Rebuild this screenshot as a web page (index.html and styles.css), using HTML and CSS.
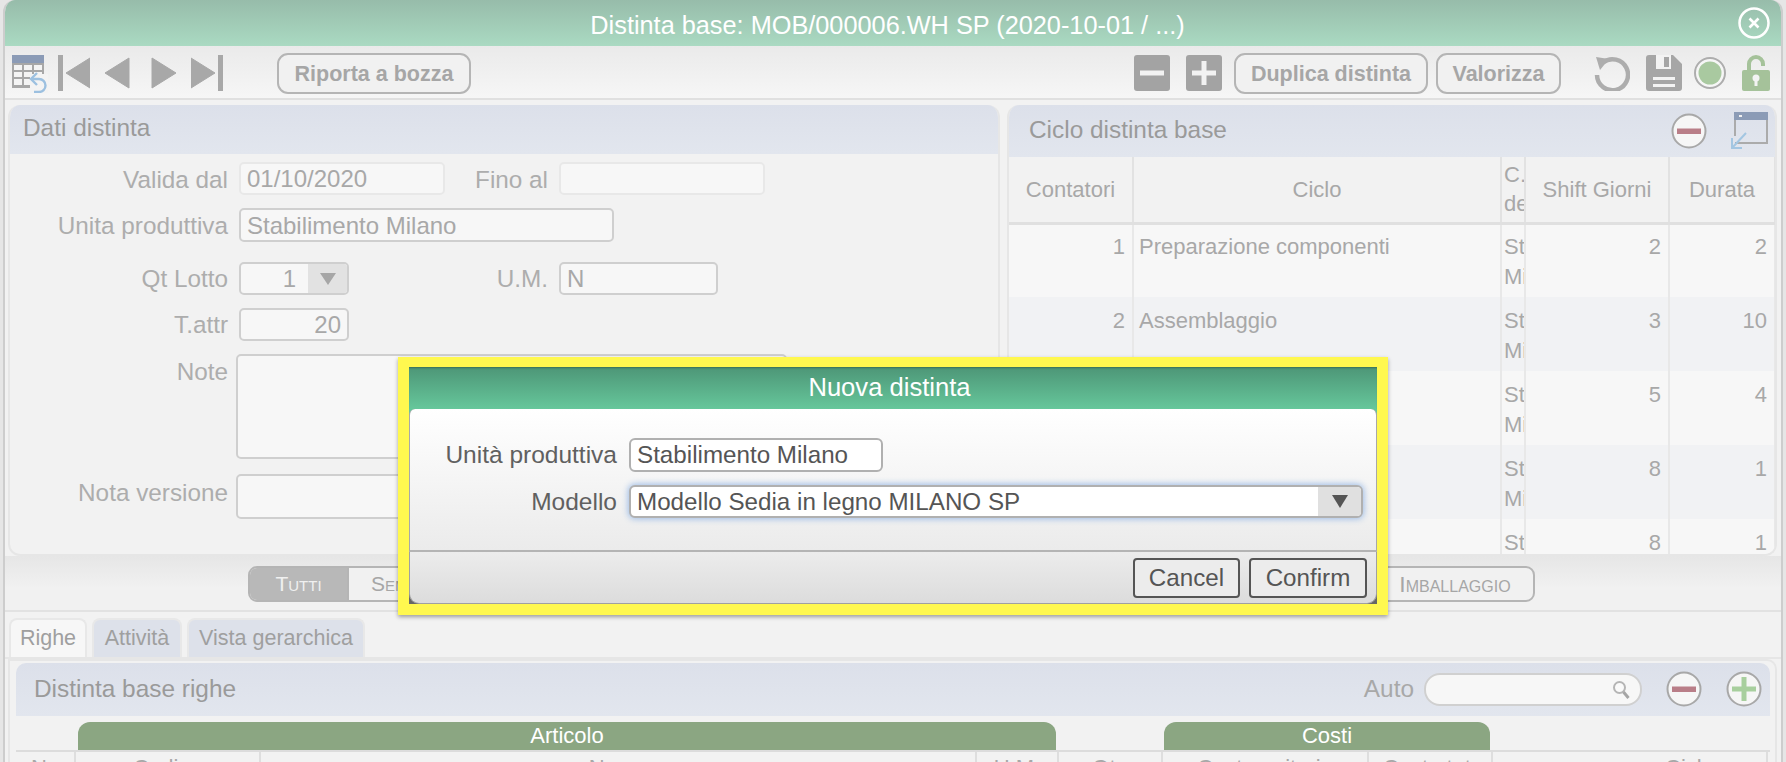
FILE: index.html
```html
<!DOCTYPE html>
<html lang="it">
<head>
<meta charset="utf-8">
<title>Distinta base</title>
<link rel="stylesheet" href="styles.css">
</head>
<body>
<div class="page">
  <div class="window">
    <header class="titlebar">
      <span></span>
      <span class="title-text">Distinta base: MOB/000006.WH SP (2020-10-01 / ...)</span>
      <svg class="close" width="32" height="32" viewBox="0 0 32 32"><circle cx="16" cy="16" r="14.5" fill="none" stroke="#fff" stroke-width="2.5"/><path d="M11.5 11.5l9 9M20.5 11.5l-9 9" stroke="#fff" stroke-width="2.6" fill="none"/></svg>
    </header>

    <div class="toolbar">
      <svg class="ic-table" width="36" height="38" viewBox="0 0 36 38"><rect x="0" y="0" width="32" height="33" fill="#a7a7a7"/><rect x="0" y="0" width="32" height="8" fill="#8b9bb6"/><g fill="#f4f4f4"><rect x="2" y="10" width="8" height="5"/><rect x="12" y="10" width="8" height="5"/><rect x="22" y="10" width="8" height="5"/><rect x="2" y="17" width="8" height="5"/><rect x="12" y="17" width="8" height="5"/><rect x="22" y="17" width="8" height="5"/><rect x="2" y="24" width="8" height="6"/><rect x="12" y="24" width="8" height="6"/></g><rect x="18" y="19" width="18" height="19" fill="#f3f3f3"/><path d="M19 24h8a6.500 6.500 0 0 1 0 13h-5" fill="none" stroke="#9cc0e0" stroke-width="2.400"/><path d="M25 18l-6 6 6 6" fill="none" stroke="#9cc0e0" stroke-width="2.400"/></svg>
      <svg class="ic-first" width="32" height="36" viewBox="0 0 32 36"><rect width="5" height="36" fill="#a8a8a8"/><path d="M32 3v30l-24-15z" fill="#a8a8a8" stroke="#a8a8a8" stroke-linejoin="round"/></svg>
      <svg class="ic-prev" width="26" height="36" viewBox="0 0 26 36"><path d="M25 3v30L1 18z" fill="#a8a8a8" stroke="#a8a8a8" stroke-linejoin="round"/></svg>
      <svg class="ic-next" width="26" height="36" viewBox="0 0 26 36"><path d="M1 3v30l24-15z" fill="#a8a8a8" stroke="#a8a8a8" stroke-linejoin="round"/></svg>
      <svg class="ic-last" width="32" height="36" viewBox="0 0 32 36"><path d="M0 3v30l24-15z" fill="#a8a8a8" stroke="#a8a8a8" stroke-linejoin="round"/><rect x="27" width="5" height="36" fill="#a8a8a8"/></svg>
      <div class="tbtn btn-back">Riporta a bozza</div>
      <div class="grow"></div>
      <svg class="ic-box" width="36" height="36" viewBox="0 0 36 36"><rect width="36" height="36" rx="3" fill="#a3a3a3"/><rect x="6" y="15.500" width="24" height="5" fill="#f2f2f2"/></svg>
      <svg class="ic-box2" width="36" height="36" viewBox="0 0 36 36"><rect width="36" height="36" rx="3" fill="#a3a3a3"/><path d="M6 18h24M18 6v24" stroke="#f2f2f2" stroke-width="5"/></svg>
      <div class="tbtn btn-dup">Duplica distinta</div>
      <div class="tbtn btn-val">Valorizza</div>
      <svg class="ic-refresh" width="36" height="36" viewBox="0 0 36 36"><path d="M9 7.500A15.500 15.500 0 1 1 3 20" fill="none" stroke="#adadad" stroke-width="4.500"/><path d="M2 2l13 2-9 11z" fill="#adadad"/></svg>
      <svg class="ic-save" width="36" height="36" viewBox="0 0 36 36"><path d="M3 0h24l9 9v24a3 3 0 0 1-3 3H3a3 3 0 0 1-3-3V3a3 3 0 0 1 3-3z" fill="#a6a6a6"/><rect x="10" y="0" width="15" height="14" fill="#f3f3f3"/><rect x="18" y="2" width="5" height="10" fill="#a6a6a6"/><rect x="7" y="22" width="22" height="3" fill="#f3f3f3"/><rect x="7" y="29" width="22" height="3" fill="#f3f3f3"/></svg>
      <svg class="ic-status" width="32" height="34" viewBox="0 0 32 34"><circle cx="16" cy="17" r="15" fill="#f6f6f6" stroke="#adadad" stroke-width="2"/><circle cx="16" cy="17" r="11.500" fill="#a9c9a0"/></svg>
      <svg class="ic-lock" width="28" height="36" viewBox="0 0 28 36"><path d="M7 16V9a7 7 0 0 1 14 0v2" fill="none" stroke="#a5c29a" stroke-width="4"/><rect y="15" width="28" height="21" rx="2" fill="#a5c29a"/><circle cx="14" cy="23" r="3.500" fill="#f3f3f3"/><rect x="12.500" y="24" width="3" height="7" fill="#f3f3f3"/></svg>
    </div>

    <div class="panels">
      <section class="panel panel-left">
        <div class="panel-head head-left">Dati distinta</div>
        <div class="form">
          <div class="row row-a">
            <div class="label">Valida dal</div>
            <div class="field faint w-date">01/10/2020</div>
            <div class="label label-2">Fino al</div>
            <div class="field faint w-date"></div>
          </div>
          <div class="row row-b">
            <div class="label">Unita produttiva</div>
            <div class="field w-unit">Stabilimento Milano</div>
          </div>
          <div class="row row-c">
            <div class="label">Qt Lotto</div>
            <div class="field w-num has-arrow"><span class="num-val">1</span><span class="arrow-box box-small"><i class="tri tri-light"></i></span></div>
            <div class="label label-um">U.M.</div>
            <div class="field w-um">N</div>
          </div>
          <div class="row row-d">
            <div class="label">T.attr</div>
            <div class="field w-num right">20</div>
          </div>
          <div class="row row-e">
            <div class="label label-top">Note</div>
            <div class="field area w-area"></div>
          </div>
          <div class="row row-f">
            <div class="label label-top2">Nota versione</div>
            <div class="field area w-area h-nota"></div>
          </div>
        </div>
      </section>

      <section class="panel panel-right">
        <div class="panel-head head-right">
          <span>Ciclo distinta base</span>
          <div class="grow"></div>
          <svg class="ic-remove" width="36" height="36" viewBox="0 0 36 36"><circle cx="18" cy="18" r="16.500" fill="#f6f6f6" stroke="#a8a8a8" stroke-width="2"/><rect x="6" y="15.500" width="24" height="5.500" fill="#b97e88"/></svg>
          <svg class="ic-expand" width="38" height="38" viewBox="0 0 38 38"><path d="M5 2v22M5 31h32V2" fill="none" stroke="#ababab" stroke-width="2"/><rect x="4" y="0" width="34" height="8" fill="#8b9bb6"/><rect x="9" y="3" width="3" height="2" fill="#f0f0f0"/><path d="M16 21L2 36M2 26v10h10" fill="none" stroke="#a3c6e2" stroke-width="2"/></svg>
        </div>
        <table class="grid">
          <colgroup><col class="c1"><col class="c2"><col class="c3"><col class="c4"><col class="c5"></colgroup>
          <thead>
            <tr><th>Contatori</th><th>Ciclo</th><th class="narrow">C. de</th><th>Shift Giorni</th><th>Durata</th></tr>
          </thead>
          <tbody>
            <tr><td class="n">1</td><td>Preparazione componenti</td><td class="narrow">Stabilimento Milano</td><td class="n">2</td><td class="n">2</td></tr>
            <tr><td class="n">2</td><td>Assemblaggio</td><td class="narrow">Stabilimento Milano</td><td class="n">3</td><td class="n">10</td></tr>
            <tr><td class="n">3</td><td>Verniciatura</td><td class="narrow">Stabilimento Milano</td><td class="n">5</td><td class="n">4</td></tr>
            <tr><td class="n">4</td><td>Controllo</td><td class="narrow">Stabilimento Milano</td><td class="n">8</td><td class="n">1</td></tr>
            <tr><td class="n">5</td><td>Imballaggio</td><td class="narrow">Stabilimento Milano</td><td class="n">8</td><td class="n">1</td></tr>
          </tbody>
        </table>
      </section>
    </div>

    <div class="segbar">
      <div class="seg">
        <div class="seg-item seg-on">Tutti</div>
        <div class="seg-item seg-mid">Semilavorati</div>
        <div class="seg-item seg-end">Imballaggio</div>
      </div>
    </div>

    <div class="tabs">
      <div class="tab tab-on">Righe</div>
      <div class="tab tab-2">Attività</div>
      <div class="tab tab-3">Vista gerarchica</div>
    </div>

    <div class="tabpanel">
      <div class="lines">
        <div class="panel-head head-lines">
          <span>Distinta base righe</span>
          <div class="grow"></div>
          <span class="auto">Auto</span>
          <div class="search">
            <svg width="18" height="20" viewBox="0 0 18 20"><circle cx="7.500" cy="7.500" r="5.500" fill="#fafafa" stroke="#b5b5b5" stroke-width="2"/><path d="M11.500 12l5 6" stroke="#a5a5a5" stroke-width="3"/></svg>
          </div>
          <svg class="ic-rm2" width="36" height="36" viewBox="0 0 36 36"><circle cx="18" cy="18" r="16.500" fill="#f6f6f6" stroke="#a8a8a8" stroke-width="2"/><rect x="6" y="15.500" width="24" height="5.500" fill="#b97e88"/></svg>
          <svg class="ic-add" width="36" height="36" viewBox="0 0 36 36"><circle cx="18" cy="18" r="16.500" fill="#f6f6f6" stroke="#a8a8a8" stroke-width="2"/><path d="M6 18h24M18 6v24" stroke="#a8cf9e" stroke-width="5"/></svg>
        </div>
        <div class="groups">
          <div class="group g-art">Articolo</div>
          <div class="group g-cost">Costi</div>
        </div>
        <div class="cols">
          <div class="col k1">Nr.</div>
          <div class="col k2">Codice</div>
          <div class="col k3">Nome</div>
          <div class="col k4">U.M.</div>
          <div class="col k5">Qta</div>
          <div class="col k6">Costo unitario</div>
          <div class="col k7">Costo tot.</div>
          <div class="col k8">Ciclo</div>
        </div>
      </div>
    </div>
  </div>

  <div class="dialog">
    <div class="dlg-title">Nuova distinta</div>
    <div class="dlg-body">
      <div class="dlg-row">
        <div class="dlg-label">Unità produttiva</div>
        <div class="dlg-field dlg-unit">Stabilimento Milano</div>
      </div>
      <div class="dlg-row dlg-row-2">
        <div class="dlg-label">Modello</div>
        <div class="dlg-field dlg-select"><span class="dlg-sel-text">Modello Sedia in legno MILANO SP</span><span class="arrow-box box-dlg"><i class="tri tri-dark"></i></span></div>
      </div>
    </div>
    <div class="dlg-foot">
      <div class="dlg-btn btn-cancel">Cancel</div>
      <div class="dlg-btn btn-confirm">Confirm</div>
    </div>
  </div>
</div>
</body>
</html>
```

FILE: styles.css
```css
* { box-sizing: border-box; }
html, body { margin: 0; padding: 0; }
body { font-family: "Liberation Sans", Arial, sans-serif; background: #e6e6e6; }
svg { display: block; flex: none; }
.page { position: relative; width: 1786px; height: 762px; overflow: hidden; background: #e6e6e6; }
.grow { flex: 1; }

.window { margin-left: 3px; width: 1780px; height: 762px; background: #f2f2f2; border-left: 2px solid #cdcdcd; border-right: 2px solid #cdcdcd; border-radius: 12px 12px 0 0; overflow: hidden; }

.titlebar { height: 46px; display: grid; grid-template-columns: 1fr auto 1fr; align-items: center; padding-right: 11px; background: linear-gradient(#97bcaa, #aadac2); color: #fff; font-size: 25.300px; }
.title-text { padding-top: 4px; }
.close { justify-self: end; }

.toolbar { height: 54px; display: flex; align-items: center; padding: 2px 11px 0 7px; background: linear-gradient(#eaeaea, #f6f6f6); border-bottom: 2px solid #e0e0e0; }
.ic-table { margin-right: 10px; margin-top: 2px; }
.ic-prev { margin-left: 14px; }
.ic-next { margin-left: 21px; }
.ic-last { margin-left: 14px; }
.tbtn { height: 41px; padding-top: 3px; border: 2px solid #b5b5b5; border-radius: 11px; background: #f1f1f1; color: #a6a6a6; font-weight: bold; font-size: 21.500px; display: flex; align-items: center; justify-content: center; }
.btn-back { width: 194px; margin-left: 54px; }
.ic-box2 { margin-left: 16px; }
.btn-dup { width: 194px; margin-left: 12px; }
.btn-val { width: 125px; margin-left: 8px; }
.ic-refresh { margin-left: 33px; }
.ic-save { margin-left: 16px; }
.ic-status { margin-left: 12px; }
.ic-lock { margin-left: 16px; }

.panels { display: flex; height: 456px; padding: 5px 4px 0 3px; gap: 7px; }
.panel { height: 451px; border: 2px solid #e6e6e6; border-top: 0; border-radius: 12px; overflow: hidden; background: #f2f2f2; }
.panel-left { width: 992px; }
.panel-right { width: 770px; }
.panel-head { display: flex; align-items: center; background: linear-gradient(#dce0ea, #e2e6ee); color: #9a9a9a; font-size: 24.400px; }
.head-left { height: 49px; padding: 0 0 3px 13px; }
.head-right { height: 52px; padding: 0 7px 0 20px; }
.head-right span { padding-bottom: 2px; }
.ic-expand { margin-left: 23px; }

.form { padding-top: 8px; }
.row { display: flex; align-items: flex-start; }
.row-a { height: 33px; }
.row-a .label { line-height: 35px; }
.row-a .field { line-height: 30px; }
.row-b { margin-top: 13px; height: 34px; }
.row-b .label { line-height: 35px; }
.row-c { margin-top: 20px; }
.row-d, .row-e { margin-top: 13px; }
.row-f { margin-top: 15px; }
.label { width: 218px; flex: none; text-align: right; font-size: 24.300px; color: #adadad; line-height: 33px; margin-right: 11px; }
.label-2 { width: 103px; margin-right: 11px; }
.label-um { width: 199px; margin-right: 11px; }
.row .label-top { line-height: 36px; margin-right: 8px; }
.row .label-top2 { line-height: 37px; margin-right: 8px; }
.field { height: 33px; border: 2px solid #cfcfcf; border-radius: 5px; background: #f7f7f7; color: #a8a8a8; font-size: 24px; line-height: 29px; padding: 0 6px; flex: none; position: relative; }
.faint { border-color: #e8e8e8; }
.w-date { width: 206px; }
.w-unit { width: 375px; height: 34px; line-height: 31px; }
.w-num { width: 110px; }
.w-um { width: 159px; }
.right { text-align: right; }
.has-arrow { display: flex; padding: 0; overflow: hidden; }
.num-val { width: 67px; text-align: right; padding-right: 12px; }
.arrow-box { display: flex; align-items: center; justify-content: center; background: #e2e2e2; }
.box-small { flex: 1; }
.tri { display: block; width: 0; height: 0; border-left: 8px solid transparent; border-right: 8px solid transparent; }
.tri-light { border-top: 12px solid #a6a6a6; }
.tri-dark { border-top: 13px solid #555; }
.area { height: 105px; }
.w-area { width: 551px; }
.h-nota { height: 45px; }

.grid { width: 766px; border-collapse: collapse; table-layout: fixed; font-size: 22px; color: #a8a8a8; }
.c1 { width: 124px; }
.c2 { width: 368px; }
.c3 { width: 24px; }
.c4 { width: 144px; }
.c5 { width: 106px; }
.grid th { height: 66px; font-weight: normal; padding: 0; border-right: 2px solid #e2e2e2; border-bottom: 3px solid #e0e0e0; line-height: 29px; overflow: hidden; }
.grid td { height: 74px; padding: 9px 7px 0 5px; vertical-align: top; line-height: 30px; border-right: 2px solid #e8e8e8; overflow: hidden; }
.grid tbody tr:first-child td { padding-top: 7px; }
.grid tbody tr:nth-child(odd) td { background: #f7f7f7; }
.grid tbody tr:nth-child(even) td { background: #f1f2f4; }
.grid .n { text-align: right; }
.grid .narrow { padding-right: 0; padding-left: 2px; text-align: left; }

.segbar { height: 56px; padding: 10px 0 0 243px; background: linear-gradient(#e6e6e6, #f1f1f1 60%); border-bottom: 2px solid #e2e2e2; }
.seg { width: 1287px; height: 36px; display: flex; border: 2px solid #b5b5b5; border-radius: 9px; overflow: hidden; font-size: 21px; font-variant: small-caps; color: #a6a6a6; background: #f1f1f1; }
.seg-item { display: flex; align-items: center; justify-content: center; }
.seg-on { width: 97px; background: #b8b8b8; color: #f0f0f0; }
.seg-mid { flex: 1; justify-content: flex-start; padding-left: 22px; border-left: 2px solid #b5b5b5; }
.seg-end { width: 148px; padding-right: 10px; border-left: 2px solid #b5b5b5; font-size: 22.800px; }

.tabs { display: flex; height: 47px; padding: 6px 0 0 4px; gap: 5px; font-size: 21.500px; color: #9f9f9f; border-bottom: 2px solid #e6e6e6; }
.tab { height: 39px; border: 2px solid #e8e8e8; border-bottom: 0; border-radius: 8px 8px 0 0; display: flex; align-items: center; justify-content: center; background: #dde1ea; }
.tab-on { width: 78px; background: #f7f7f7; }
.tab-2 { width: 90px; }
.tab-3 { width: 178px; }

.tabpanel { margin: 0 4px 0 3px; height: 120px; border: 2px solid #e6e6e6; border-bottom: 0; border-radius: 0 10px 0 0; padding: 2px 5px 0 6px; }
.lines { height: 120px; background: #f2f2f2; }
.head-lines { height: 53px; padding: 0 8px 2px 18px; border-radius: 10px 10px 0 0; }
.auto { color: #a8a8a8; margin-right: 10px; }
.search { width: 218px; height: 33px; margin-top: 2px; border: 2px solid #d0d0d0; border-radius: 16px; background: #f7f7f7; display: flex; align-items: center; justify-content: flex-end; padding-right: 10px; }
.ic-rm2 { margin-left: 24px; }
.ic-add { margin-left: 24px; }
.groups { height: 34px; padding-top: 6px; display: grid; grid-template-columns: 978px 326px; column-gap: 108px; padding-left: 62px; }
.group { background: #8ba682; color: #fff; font-size: 22px; line-height: 28px; text-align: center; border-radius: 12px 12px 0 0; }
.cols { display: grid; grid-template-columns: 60px 185px 716px 82px 104px 206px 124px 275px; height: 40px; border-top: 2px solid #dcdcdc; font-size: 22px; color: #a8a8a8; }
.col { text-align: center; border-right: 2px solid #dedede; line-height: 32px; white-space: nowrap; overflow: hidden; }
.k8 { padding-left: 120px; border-right: 2px solid #dedede; }

.dialog { position: absolute; left: 398px; top: 357px; width: 990px; height: 258px; border: solid #fff84f; border-width: 10px 11px 11px 11px; box-shadow: 0 2px 4px rgba(0,0,0,.35); background: linear-gradient(#65c69a 50%, #666 50%); color: #555; font-size: 24.200px; display: flex; flex-direction: column; }
.dlg-title { height: 42px; flex: none; padding-right: 7px; background: linear-gradient(#4d9677, #66c79b); box-shadow: inset 0 2px 2px -1px #3a6f58; color: #fff; font-size: 25.600px; text-align: center; line-height: 41px; }
.dlg-body { height: 143px; flex: none; padding-top: 29px; background: linear-gradient(#fff, #ebebeb); border-radius: 6px 6px 0 0; border: solid #a8a8a8; border-width: 0 1px 2px; border-bottom-color: #b4b4b4; }
.dlg-row { display: flex; }
.dlg-row-2 { margin-top: 13px; }
.dlg-label { width: 207px; text-align: right; margin-right: 12px; line-height: 34px; color: #606060; font-size: 24.500px; }
.dlg-field { height: 34px; border: 2px solid #b0b0b0; border-radius: 6px; background: #fff; line-height: 30px; padding-left: 6px; }
.dlg-unit { width: 254px; }
.dlg-select { width: 734px; height: 33px; display: flex; padding: 0 0 0 6px; overflow: hidden; box-shadow: 0 0 6px 1px #9dbce6; line-height: 29px; position: relative; }
.dlg-sel-text { flex: 1; }
.box-dlg { width: 43px; background: #e0e0e0; }
.dlg-foot { flex: 1; display: flex; justify-content: flex-end; align-items: flex-start; gap: 9px; padding: 6px 9px 0 0; background: linear-gradient(#ececec, #dcdcdc); border-radius: 0 0 10px 10px; border: solid #a0a0a0; border-width: 0 1px 1px; }
.dlg-btn { height: 40px; border: 2px solid #555; border-radius: 4px; background: #ececec; display: flex; align-items: center; justify-content: center; }
.btn-cancel { width: 107px; }
.btn-confirm { width: 118px; }
```
